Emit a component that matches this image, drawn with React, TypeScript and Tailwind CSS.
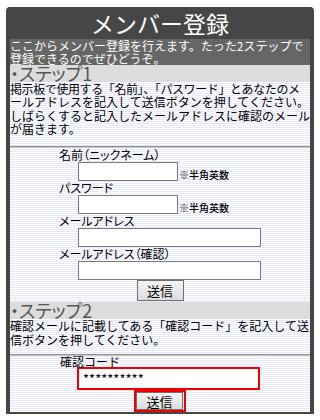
const jp = "font-['Noto_Sans_CJK_JP','Noto_Sans',sans-serif]";

const stripes =
  'bg-[repeating-linear-gradient(to_bottom,#ffffff_0px,#ffffff_1px,#e8e8fb_1px,#e8e8fb_2px)]';

function StepHeader({ label }: { label: string }) {
  return (
    <div className="h-[17px] bg-[#dcdcdc] text-[18px] leading-[17px] text-[#555] [font-feature-settings:'palt']">
      {label}
    </div>
  );
}

function Rule() {
  return <div className="h-[2px] border-t border-t-[#8f8f8f] border-b border-b-[#c8c8c8]" />;
}

function Field({ label, wide, note }: { label: string; wide?: boolean; note?: boolean }) {
  return (
    <div>
      <div className="h-[14px] pl-[49px] text-[12px] leading-[14px] text-black [font-feature-settings:'palt']">
        {label}
      </div>
      <div className="flex items-end pl-[68px]">
        <input
          type="text"
          className={`block h-[19px] border border-[#7a7a7a] bg-white px-1 text-[12px] outline-none ${
            wide ? 'w-[183px]' : 'w-[100px]'
          }`}
        />
        {note && <span className="pl-px text-[10px] leading-[12px] font-medium text-black">※半角英数</span>}
      </div>
    </div>
  );
}

function SendButton() {
  return (
    <button
      type="button"
      className="block h-full w-[47px] border border-[#707070] bg-[linear-gradient(to_bottom,#f4f4f4,#dcdcdc)] text-[13px] leading-none text-black"
    >
      送信
    </button>
  );
}

export default function App() {
  return (
    <div className={`min-h-screen bg-white pt-[7px] ${jp}`}>
      <div className="mx-[6px] w-[308px] overflow-hidden rounded-t-[4px] border-x-4 border-b-2 border-[#464646] bg-[#464646]">
        {/* Title */}
        <h1 className="h-[32px] text-center text-[23px] leading-[32px] text-white">メンバー登録</h1>

        {/* Intro */}
        <p className="h-[26px] whitespace-nowrap bg-[#666666] text-[12px] leading-[13px] text-white">
          ここからメンバー登録を行えます。たった2ステップで
          <br />
          登録できるのでぜひどうぞ。
        </p>

        {/* Step 1 */}
        <StepHeader label="・ステップ1" />
        <div className={stripes}>
          <p className="h-[53px] whitespace-nowrap text-[12px] leading-[13.25px] text-black">
            <span className="tracking-[-0.4px]">掲示板で使用する「名前」、「パスワード」とあなたのメ</span>
            <br />
            ールアドレスを記入して送信ボタンを押してください。
            <br />
            しばらくすると記入したメールアドレスに確認のメール
            <br />
            が届きます。
          </p>
          <div className="pt-[11px]">
            <Rule />
          </div>
          <Field label="名前（ニックネーム）" note />
          <Field label="パスワード" note />
          <Field label="メールアドレス" wide />
          <Field label="メールアドレス（確認）" wide />
          <div className="flex h-[21px] justify-center">
            <SendButton />
          </div>
          <div className="h-px" />
        </div>

        {/* Step 2 */}
        <StepHeader label="・ステップ2" />
        <div className={stripes}>
          <p className="h-[27px] whitespace-nowrap text-[12px] leading-[13.5px] text-black">
            確認メールに記載してある「確認コード」を記入して送
            <br />
            信ボタンを押してください。
          </p>
          <div className="pt-[8px]">
            <Rule />
          </div>
          <div className="h-[11px] pl-[50px] text-[12px] leading-[12px] text-black">確認コード</div>
          <div className="pl-[67px]">
            <input
              type="text"
              defaultValue="**********"
              className="block h-[23px] w-[183px] border-2 border-[#ee0000] bg-white px-1 text-[13px] text-black outline-none"
            />
          </div>
          <div className="flex justify-center">
            <div className="flex h-[22px] border-2 border-[#ee0000] pr-px">
              <SendButton />
            </div>
          </div>
        </div>
      </div>
    </div>
  );
}
